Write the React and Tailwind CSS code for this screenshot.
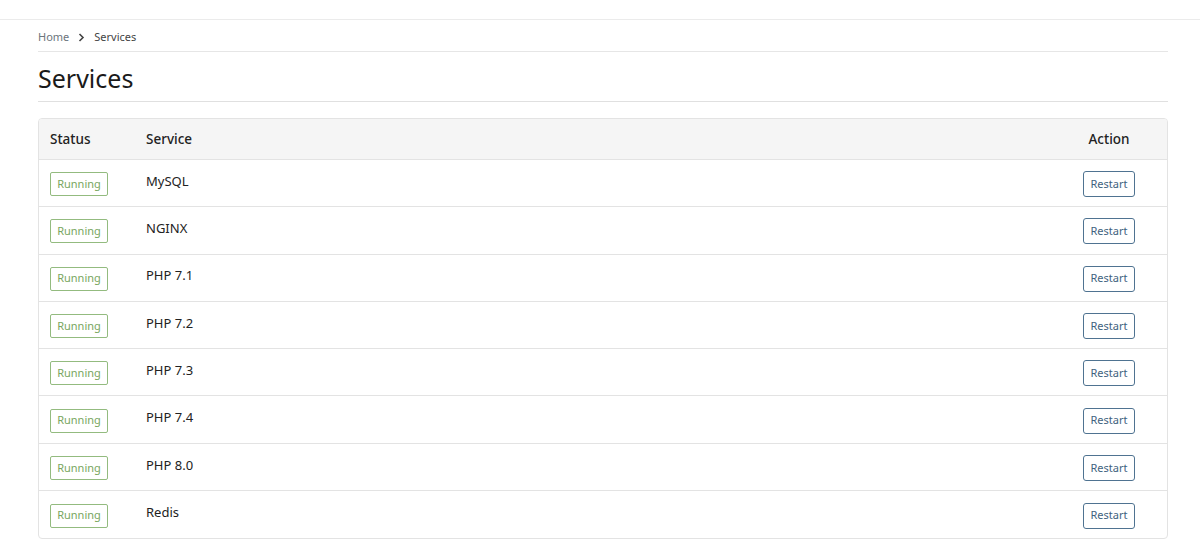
import React from "react";

const services = ["MySQL", "NGINX", "PHP 7.1", "PHP 7.2", "PHP 7.3", "PHP 7.4", "PHP 8.0", "Redis"];

export default function App() {
  return (
    <div className="min-h-[555px] bg-white text-[#212529]" style={{ fontFamily: '"Noto Sans", "Open Sans", sans-serif' }}>
      <div className="h-[20px] border-b border-[#ebebeb]" />
      <div className="ml-[38px] w-[1130px]">
        <div className="flex h-[32px] items-center gap-[8px] border-b border-[#e6e6e6] pt-[3px] text-[11px]">
          <span className="text-[#6c757d]">Home</span>
          <svg width="7" height="9" viewBox="0 0 7 9" className="mx-[1px]">
            <path d="M1.5 1 L5 4.5 L1.5 8" fill="none" stroke="#444" strokeWidth="1.6" />
          </svg>
          <span className="text-[#444]">Services</span>
        </div>
        <div className="flex h-[50px] items-center border-b border-[#e0e0e0] pt-[3px]">
          <h1 className="text-[25px] leading-none text-[#1a1a1a]">Services</h1>
        </div>
        <div className="mt-[16px] overflow-hidden rounded-[4px] border border-[#e3e3e3]">
          <div className="grid h-[41px] grid-cols-[97px_1fr_76px_20px] items-center border-b border-[#e3e3e3] bg-[#f5f5f5] text-[13.5px] font-medium text-[#222]">
            <div className="pl-[11px]">Status</div>
            <div className="pl-[10px]">Service</div>
            <div className="text-center">Action</div>
            <div />
          </div>
          {services.map((s, i) => (
            <div
              key={s}
              className={`grid h-[47.3px] grid-cols-[97px_1fr_76px_20px] items-center text-[13px] ${i < services.length - 1 ? "border-b border-[#e3e3e3]" : ""}`}
            >
              <div className="pl-[11px] pt-[2px]">
                <span className="inline-flex h-[24px] w-[58px] items-center justify-center rounded-[2px] border border-[#93bb7f] text-[11px] text-[#78a65e]">
                  Running
                </span>
              </div>
              <div className="-mt-[3px] pl-[10px] text-[#222]">{s}</div>
              <div className="flex justify-center pt-[2px]">
                <button className="flex h-[26px] w-[52px] items-center justify-center rounded-[3px] border border-[#4f7391] bg-white text-[11px] text-[#3f6280]">
                  Restart
                </button>
              </div>
              <div />
            </div>
          ))}
        </div>
      </div>
    </div>
  );
}
